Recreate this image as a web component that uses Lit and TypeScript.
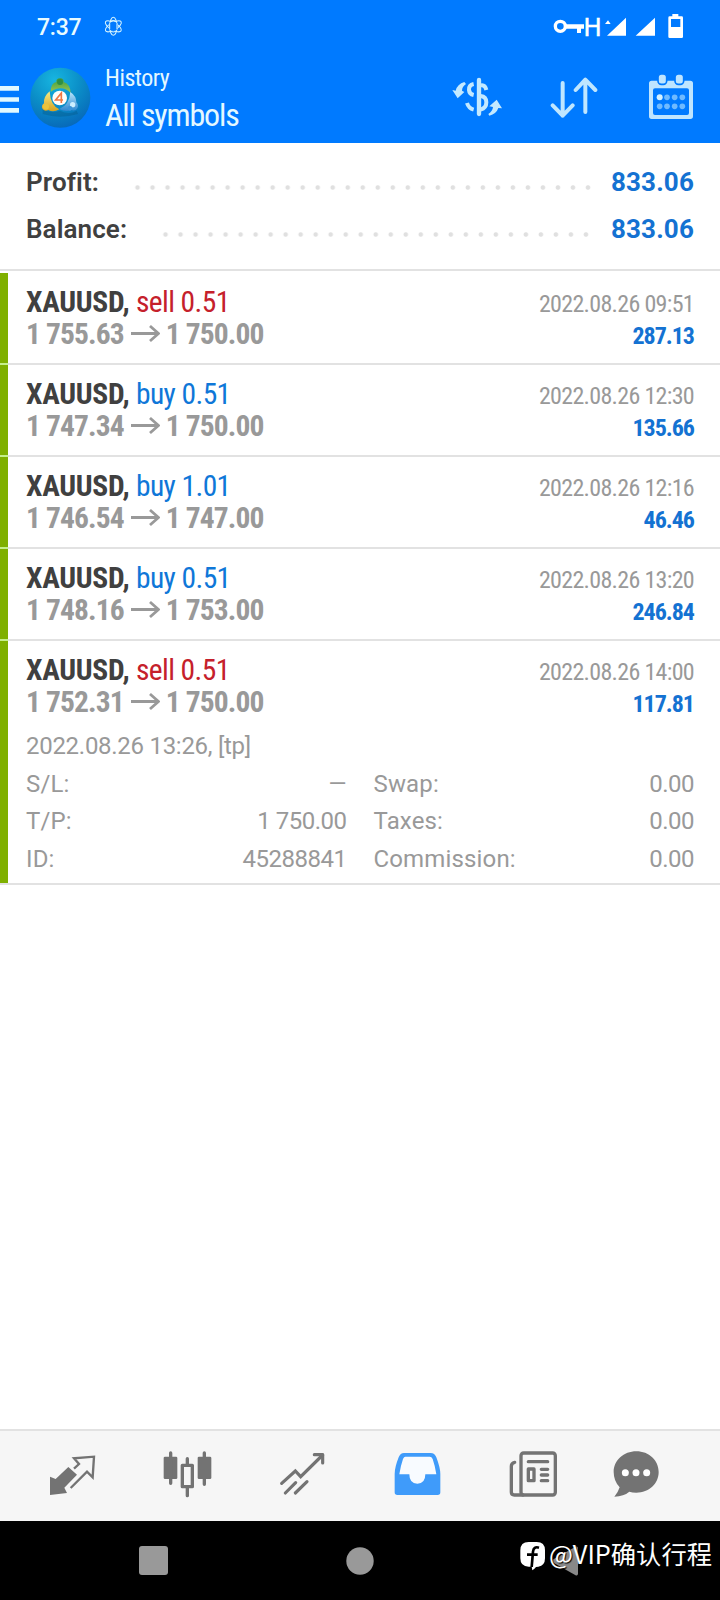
import { LitElement, html, css, svg } from "lit";
import { customElement } from "lit/decorators.js";

interface Deal {
  side: "sell" | "buy";
  volume: string;
  open: string;
  close: string;
  time: string;
  profit: string;
  opened?: string;
  details?: string[][];
}

const DEALS: Deal[] = [
  { side: "sell", volume: "0.51", open: "1 755.63", close: "1 750.00", time: "2022.08.26 09:51", profit: "287.13" },
  { side: "buy", volume: "0.51", open: "1 747.34", close: "1 750.00", time: "2022.08.26 12:30", profit: "135.66" },
  { side: "buy", volume: "1.01", open: "1 746.54", close: "1 747.00", time: "2022.08.26 12:16", profit: "46.46" },
  { side: "buy", volume: "0.51", open: "1 748.16", close: "1 753.00", time: "2022.08.26 13:20", profit: "246.84" },
  {
    side: "sell", volume: "0.51", open: "1 752.31", close: "1 750.00", time: "2022.08.26 14:00", profit: "117.81",
    opened: "2022.08.26 13:26, [tp]",
    details: [
      ["S/L:", "—", "Swap:", "0.00"],
      ["T/P:", "1 750.00", "Taxes:", "0.00"],
      ["ID:", "45288841", "Commission:", "0.00"],
    ],
  },
];

@customElement("status-bar")
class StatusBar extends LitElement {
  static styles = css`
    :host { display: flex; height: 54px; background: #007aff; color: #e9fbff; font-family: Roboto, sans-serif; }
    .time { margin-left: 37px; width: 67px; font-size: 23px; font-weight: 500; line-height: 55px; letter-spacing: -0.2px; }
    .signals { margin-left: auto; margin-right: 35px; }
    .net { font: 400 77px Roboto, sans-serif; }
  `;
  render() {
    return html`
      <span class="time">7:37</span>
      <svg width="19" height="54" viewBox="312 0 57 162" fill="none" stroke="#d5f4ff" stroke-width="3.2">
        <ellipse cx="340" cy="79" rx="11" ry="27" />
        <ellipse cx="340" cy="79" rx="11" ry="27" transform="rotate(60 340 79)" />
        <ellipse cx="340" cy="79" rx="11" ry="27" transform="rotate(120 340 79)" />
        <circle cx="340" cy="79" r="14" fill="#007aff" stroke="none" />
        <path d="M330 66q10-8 20 0M330 92q10 8 20 0M329 70v18M351 70v18" />
      </svg>
      <svg class="signals" width="132" height="54" viewBox="369 0 396 162" fill="#fff">
        <circle cx="391" cy="79" r="15" fill="none" stroke="#fff" stroke-width="10" />
        <path d="M404 73h58v13h-9v13h-12V86h-37z" />
        <text class="net" x="461" y="108" textLength="53" lengthAdjust="spacingAndGlyphs" stroke="#fff" stroke-width="1.5">H</text>
        <path d="M525 72l9-11 8 11zM588 53v54h-57zM675 53v54h-58z" />
        <path fill-rule="evenodd" d="M727 42h18v7h10q4 0 4 4v57q0 4-4 4h-36q-4 0-4-4V53q0-4 4-4h8zM723 57v24h28V57z" />
      </svg>
    `;
  }
}

@customElement("title-bar")
class TitleBar extends LitElement {
  static styles = css`
    :host { display: flex; height: 89px; background: #007aff; color: #e4f8ff; font-family: Roboto, sans-serif; font-stretch: 75%; }
    .titles { margin-left: 12px; padding-top: 8px; white-space: nowrap; }
    .small { font-size: 24px; line-height: 32px; letter-spacing: -0.5px; }
    .large { font-size: 32px; line-height: 43px; letter-spacing: -1.15px; font-weight: 440; }
    .actions { display: flex; margin-left: auto; margin-right: 25px; }
    .sort { margin-left: 48px; }
    .calendar { margin-left: 49px; }
  `;
  render() {
    return html`
      <svg width="93" height="89" viewBox="0 162 279 267">
        <defs>
          <radialGradient id="sea" cx=".4" cy=".2" r=".85">
            <stop offset="0" stop-color="#17b5e0" /><stop offset=".5" stop-color="#0b8fc8" /><stop offset="1" stop-color="#0766b8" />
          </radialGradient>
          <linearGradient id="leaf" x2="0" y2="1"><stop stop-color="#3f9d3f" /><stop offset="1" stop-color="#9bc653" /></linearGradient>
          <linearGradient id="gold" x2="0" y2="1"><stop stop-color="#f3ea84" /><stop offset="1" stop-color="#d8a21d" /></linearGradient>
          <linearGradient id="ice" x2="0" y2="1"><stop stop-color="#b7e5fb" /><stop offset="1" stop-color="#2d86cf" /></linearGradient>
        </defs>
        <path fill="#e1f9ff" d="M0 258h57v14H0zM0 292h57v13H0zM0 324h57v14H0z" />
        <circle cx="181" cy="293" r="90" fill="url(#sea)" />
        <path fill="#07547f" opacity=".35" d="M128 328q25 14 52 4 28 14 50 0l4 10q-54 16-106 0z" />
        <path fill="url(#leaf)" d="M152 276q0-27 17-30-1-11 11-11 12 0 11 11 20 6 21 33-12-14-31-14-15 0-29 11z" />
        <circle cx="180" cy="246" r="9" fill="#2f8f43" />
        <path fill="url(#gold)" d="M149 274q-19 16-17 36-10 8-4 17 6 9 17 3 15 8 33-2-27-12-29-54z" />
        <circle cx="138" cy="320" r="9" fill="#e9c33b" />
        <path fill="url(#ice)" d="M211 276q18 12 18 31 8 9 3 18-6 10-17 5-18 8-37-3 30-12 33-51z" />
        <circle cx="218" cy="314" r="8" fill="#cdeeff" /><circle cx="210" cy="325" r="7" fill="#3b93d8" />
        <circle cx="179" cy="294" r="22" fill="#fffdf8" />
        <path fill="none" stroke="#ef7843" stroke-width="5" d="M184 309v-30l-17 21h22" />
      </svg>
      <div class="titles">
        <div class="small">History</div>
        <div class="large">All symbols</div>
      </div>
      <div class="actions">
        <svg width="52" height="89" viewBox="60 162 156 267" fill="none" stroke="#c3e9ff" stroke-width="12">
          <path stroke-width="13" stroke-linecap="round" d="M147 240v102" />
          <path d="M131 252q-15 3-14 18 1 12 14 15M111 309q5 16 20 20M152 256q13-3 17 14M152 288q17 2 17 19t-17 22" />
          <g fill="#c3e9ff" stroke="none">
            <path d="M103 246l5 6q-12 8-12 20l7 4-20 19-16-25 10 2q5-20 26-26z" />
            <path d="M178 347l-3-5q13-9 14-21l-11-2 22-20 16 26-11-1q-6 18-27 23z" />
          </g>
        </svg>
        <svg class="sort" width="48" height="89" viewBox="360 162 144 267" fill="none" stroke="#bfe6ff" stroke-width="12" stroke-linecap="round" stroke-linejoin="round">
          <path d="M398 249v98M368 316l30 31 30-31M466 336v-96M437 270l29-31 30 31" />
        </svg>
        <svg class="calendar" width="48" height="89" viewBox="651 162 144 267" fill="#bfe5ff">
          <path fill-rule="evenodd" d="M665 242h116q8 0 8 8v99q0 8-8 8H665q-8 0-8-8v-99q0-8 8-8zM675 265q-6 0-6 6v68q0 6 6 6h96q6 0 6-6v-68q0-6-6-6z" />
          <rect x="684" y="222" width="26" height="31" rx="10" stroke="#007aff" stroke-width="5" />
          <rect x="735" y="222" width="26" height="31" rx="10" stroke="#007aff" stroke-width="5" />
          <circle cx="689" cy="292" r="9" fill="#d5f1ff" />
          ${[[711, 292], [734, 292], [757, 292], [689, 319], [711, 319], [734, 319], [757, 319]].map(
            ([x, y]) => svg`<circle cx=${x} cy=${y} r="8.5" fill="#6fbaff" />`
          )}
        </svg>
      </div>
    `;
  }
}

@customElement("deal-row")
class DealRow extends LitElement {
  static properties = { deal: { attribute: false }, last: { type: Boolean } };
  declare deal: Deal;
  declare last: boolean;
  static styles = css`
    :host { display: grid; grid-template-columns: 8px 1fr; min-height: 92px; box-sizing: border-box; font-family: Roboto, sans-serif; color: #999; }
    .mark { background: #7fb000; border-bottom: 2px solid #c5ef8c; }
    .mark.end { border-color: #e2e2e2; }
    .body { border-bottom: 2px solid #e2e2e2; padding: 12.6px 26px 0 18px; }
    .line { display: flex; justify-content: space-between; height: 32.2px; line-height: 32.2px; font-size: 29.5px; font-stretch: 75%; white-space: nowrap; }
    .symbol { color: #404040; font-weight: 700; letter-spacing: -0.3px; }
    .sell, .buy { letter-spacing: -0.6px; }
    .sell { color: #c5202b; }
    .buy { color: #0f77d8; }
    .prices { display: flex; font-weight: 700; letter-spacing: -0.88px; }
    .arrow { margin: 0 5.5px 0 7.5px; }
    .time { font-size: 24px; letter-spacing: -0.68px; }
    .profit { font-size: 24px; font-weight: 700; color: #1472d2; letter-spacing: -1px; }
    .time, .profit { padding-top: 2px; }
    .more { padding-top: 9.6px; height: 155.4px; line-height: 37.6px; font-size: 24px; }
    .opened { letter-spacing: -0.28px; height: 38.2px; }
    .pair { display: grid; grid-template-columns: 1fr 1fr; column-gap: 27px; height: 37.5px; }
    .cell { display: flex; justify-content: space-between; }
    .label { letter-spacing: 0.15px; }
    .number { letter-spacing: -0.5px; }
    .none { font-size: 23px; }
  `;
  render() {
    const d = this.deal;
    return html`
      <div class="mark ${this.last ? "end" : ""}"></div>
      <div class="body">
        <div class="line">
          <span><span class="symbol">XAUUSD, </span><span class=${d.side}>${d.side} ${d.volume}</span></span>
          <span class="time">${d.time}</span>
        </div>
        <div class="line">
          <span class="prices">${d.open}
            <svg class="arrow" width="29" height="32" viewBox="0 0 29 32" fill="none" stroke="#999" stroke-width="2.8">
              <path d="M0 15.5h27M19 8l8.500 7.500L19 23" />
            </svg>${d.close}</span>
          <span class="profit">${d.profit}</span>
        </div>
        ${d.details
          ? html`<div class="more">
              <div class="opened">${d.opened}</div>
              ${d.details.map(
                ([a, b, c, e]) => html`<div class="pair">
                  <div class="cell"><span class="label">${a}</span><span class=${b === "—" ? "none" : "number"}>${b}</span></div>
                  <div class="cell"><span class="label">${c}</span><span class="number">${e}</span></div>
                </div>`
              )}
            </div>`
          : ""}
      </div>
    `;
  }
}

@customElement("tab-bar")
class TabBar extends LitElement {
  static styles = css`
    :host { display: flex; height: 90px; padding-left: 48px; background: #f6f6f6; border-top: 2px solid #e2e2e2; }
    .chart { margin-left: 65px; }
    .trade, .news, .inbox { margin-left: 66px; }
    .inbox { margin-left: 67px; }
    .chat { margin-left: 54px; }
  `;
  render() {
    return html`
      <svg width="49" height="90" viewBox="144 33 147 270" fill="#737373">
        <path d="M205 141l26 23-38 39 8 16-51 6v-55l17 7z" />
        <path fill="none" stroke="#737373" stroke-width="7" d="M222 146l15-14-15-17 60-5-4 62-17-17-49 49" />
      </svg>
      <svg class="chart" width="51" height="90" viewBox="486 33 153 270" fill="#737373">
        <rect x="491" y="110" width="41" height="67" rx="4" /><rect x="593" y="110" width="41" height="67" rx="4" />
        <rect x="547" y="136" width="30" height="64" fill="#f6f6f6" stroke="#737373" stroke-width="10" stroke-linejoin="round" />
        <path stroke="#737373" stroke-width="10" stroke-linecap="round" d="M512 99v91M613 99v94M562 116v16M562 204v23" />
      </svg>
      <svg class="trade" width="47" height="90" viewBox="837 33 141 270" fill="none" stroke="#737373" stroke-width="9.5" stroke-linecap="round">
        <path d="M845 190l41-37 16 17 66-65M856 219l31-31M886 219l35-34" />
        <path stroke-linejoin="round" d="M943 104h25v25" />
      </svg>
      <svg class="inbox" width="49" height="90" viewBox="99 33 147 270">
        <path fill="#3f9bfa" d="M132 99h80q12 0 17 13 12 32 12 50v55q0 8-8 8H112q-8 0-8-8v-55q0-20 12-50 5-13 16-13z" />
        <path fill="#f8fbff" d="M136 110h73q6 0 9 7 7 20 11 46h-33q0 28-24 28t-24-28h-30q4-26 11-46 3-7 7-7z" />
      </svg>
      <svg class="news" width="50" height="90" viewBox="444 33 150 270" fill="none" stroke="#737373" stroke-width="10" stroke-linecap="round">
        <rect x="483" y="99" width="103" height="126" rx="8" />
        <path d="M464 127q-10 2-10 12v77q0 9 9 9h26M505 125h58" />
        <rect x="505" y="147" width="17" height="35" stroke-linejoin="round" />
        <path d="M544 148h19M544 165h19M544 182h19" />
      </svg>
      <svg class="chat" width="48" height="90" viewBox="756 33 144 270">
        <path fill="#737373" d="M829 94c38 0 67 27 67 62s-29 62-67 62q-12 0-21-3-16 14-45 15 11-12 16-28-18-19-18-46c0-35 30-62 68-62z" />
        <g fill="#fff"><circle cx="796" cy="158" r="10.500" /><circle cx="828" cy="158" r="10.500" /><circle cx="860" cy="158" r="10.500" /></g>
      </svg>
    `;
  }
}

@customElement("system-nav")
class SystemNav extends LitElement {
  static styles = css`
    :host { display: block; position: relative; height: 79px; background: #000; }
    .keys { display: flex; align-items: center; height: 79px; padding-left: 139px; }
    .home { margin-left: 178px; }
    .back { margin-left: 178px; }
    .stamp { position: absolute; right: 8px; top: 12px; display: flex; align-items: center; color: #fff; white-space: nowrap;
      font: 400 25.3px/40px "Noto Sans CJK SC", sans-serif; text-shadow: 1px 1px 1px #000; }
    .logo { margin: 6px 3px 0 0; }
  `;
  render() {
    return html`
      <div class="keys">
        <svg width="29" height="29"><rect width="29" height="29" rx="3" fill="#999" /></svg>
        <svg class="home" width="28" height="28"><circle cx="14" cy="14" r="13.700" fill="#999" /></svg>
        <svg class="back" width="28" height="30"><path fill="#888" d="M24 0.500q2-0.500 2 2v25q0 2.500-2 2L1 16.500q-2-1.500 0-3z" /></svg>
      </div>
      <div class="stamp">
        <svg class="logo" width="26" height="30" viewBox="478 366 78 90">
          <path fill="#fff" d="M504 369h24q25 0 25 25v24q0 22-20 25l-7 1q-4 6-11 10l-2-11h-9q-25 0-25-25v-24q0-25 25-25z" />
          <path fill="none" stroke="#000" stroke-width="8" d="M535 386q-16-5-18 12l-4 46M499 407h32" />
        </svg><span>@VIP确认行程</span>
      </div>
    `;
  }
}

@customElement("app-root")
class AppRoot extends LitElement {
  static styles = css`
    :host { display: flex; flex-direction: column; width: 720px; height: 1600px; background: #fff; font-family: Roboto, sans-serif; }
    .summary { height: 126px; box-sizing: border-box; padding: 15.5px 26px 0; }
    .total { display: flex; height: 47px; line-height: 47px; font-size: 26px; font-weight: 600; letter-spacing: 0.1px; color: #404040; }
    .dots { margin-left: auto; margin-right: 15px; height: 5px; margin-top: 26.5px; background: radial-gradient(circle, #e0e0e0 1.8px, transparent 2.700px) 0 0 / 15.02px 5px; }
    .profit { width: 465.6px; }
    .balance { width: 435.6px; margin-right: 17px; }
    .value { color: #1472d2; width: 83.500px; text-align: right; font-weight: 700; letter-spacing: 0.15px; }
    .list { flex: 1; border-top: 2px solid #e2e2e2; padding-top: 2px; }
  `;
  render() {
    return html`
      <status-bar></status-bar>
      <title-bar></title-bar>
      <div class="summary">
        <div class="total"><span>Profit:</span><span class="dots profit"></span><span class="value">833.06</span></div>
        <div class="total"><span>Balance:</span><span class="dots balance"></span><span class="value">833.06</span></div>
      </div>
      <div class="list">
        ${DEALS.map((d, i) => html`<deal-row .deal=${d} ?last=${i === DEALS.length - 1}></deal-row>`)}
      </div>
      <tab-bar></tab-bar>
      <system-nav></system-nav>
    `;
  }
}
